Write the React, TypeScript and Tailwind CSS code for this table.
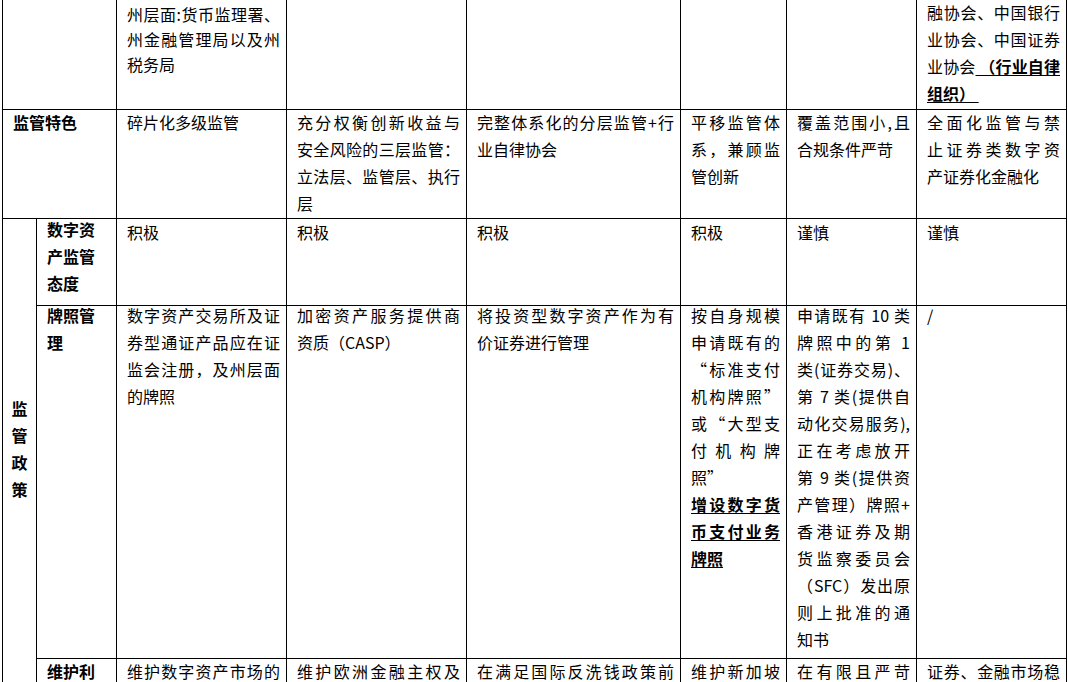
import React from 'react';

type Para = { lines: React.ReactNode[]; bold?: boolean; underline?: boolean };

const p = (...lines: React.ReactNode[]): Para => ({ lines });
const strong = (...lines: React.ReactNode[]): Para => ({ lines, bold: true, underline: true });

function Lines({ paras, className = '' }: { paras: Para[]; className?: string }) {
  return (
    <div className={className}>
      {paras.map((para, i) => (
        <div key={i} className={para.bold ? 'font-bold' : ''}>
          {para.lines.map((line, j) => (
            <div
              key={j}
              className={
                j < para.lines.length - 1 ? 'text-justify [text-align-last:justify]' : ''
              }
            >
              {para.underline ? <span className="underline underline-offset-2">{line}</span> : line}
            </div>
          ))}
        </div>
      ))}
    </div>
  );
}

// bold row labels, left aligned, no spreading
function Label({ lines, className = '' }: { lines: string[]; className?: string }) {
  return (
    <div className={`font-bold ${className}`}>
      {lines.map((l, i) => (
        <div key={i}>{l}</div>
      ))}
    </div>
  );
}

function Cell({
  className = '',
  children,
}: {
  className?: string;
  children?: React.ReactNode;
}) {
  return (
    <div className={`border-r border-b border-black pl-[10px] pr-[6px] ${className}`}>
      {children}
    </div>
  );
}

export default function App() {
  return (
    <div className="w-[1068px] h-[682px] overflow-hidden bg-white pl-[2px] text-black text-[16px] leading-[27px] font-['Noto_Sans_CJK_SC',sans-serif]">
      <div className="grid grid-cols-[34px_80px_170px_180px_214px_106px_130px_150px] grid-rows-[110px_109px_87px_353px_120px] border-l border-black">
        {/* row 0, partly above the fold */}
        <Cell className="col-span-2" />
        <Cell>
          <Lines
            className="pt-[2px] leading-[25px]"
            paras={[p('州层面:货币监理署、', '州金融管理局以及州', '税务局')]}
          />
        </Cell>
        <Cell />
        <Cell />
        <Cell />
        <Cell />
        <Cell className="pt-[1px]">
          <Lines
            className="-mt-[2px]"
            paras={[
              p(
                '融协会、中国银行',
                '业协会、中国证券',
                <>
                  业协会
                  <span className="font-bold underline underline-offset-2"> （行业自律</span>
                </>,
                <span className="font-bold underline underline-offset-2">组织）{'\u00a0'}</span>
              ),
            ]}
          />
        </Cell>

        {/* 监管特色 */}
        <Cell className="col-span-2">
          <Label className="-mt-[1px]" lines={['监管特色']} />
        </Cell>
        <Cell>
          <Lines className="-mt-[1px]" paras={[p('碎片化多级监管')]} />
        </Cell>
        <Cell>
          <Lines
            className="-mt-[1px]"
            paras={[p('充分权衡创新收益与', '安全风险的三层监管：', '立法层、监管层、执行', '层')]}
          />
        </Cell>
        <Cell>
          <Lines className="-mt-[1px]" paras={[p('完整体系化的分层监管+行', '业自律协会')]} />
        </Cell>
        <Cell>
          <Lines className="-mt-[1px]" paras={[p('平移监管体', '系，兼顾监', '管创新')]} />
        </Cell>
        <Cell>
          <Lines className="-mt-[1px]" paras={[p('覆盖范围小,且', '合规条件严苛')]} />
        </Cell>
        <Cell>
          <Lines
            className="-mt-[1px]"
            paras={[p('全面化监管与禁', '止证券类数字资', '产证券化金融化')]}
          />
        </Cell>

        {/* 监管政策 group */}
        <Cell className="row-span-3 !pl-0 !pr-0 text-center font-bold">
          <div className="pt-[176px]">
            <div>监</div>
            <div>管</div>
            <div>政</div>
            <div>策</div>
          </div>
        </Cell>

        <Cell>
          <Label className="-mt-[3px]" lines={['数字资', '产监管', '态度']} />
        </Cell>
        <Cell>积极</Cell>
        <Cell>积极</Cell>
        <Cell>积极</Cell>
        <Cell>积极</Cell>
        <Cell>谨慎</Cell>
        <Cell>谨慎</Cell>

        <Cell>
          <Label className="-mt-[4px]" lines={['牌照管', '理']} />
        </Cell>
        <Cell>
          <Lines
            className="-mt-[4px]"
            paras={[p('数字资产交易所及证', '券型通证产品应在证', '监会注册，及州层面', '的牌照')]}
          />
        </Cell>
        <Cell>
          <Lines className="-mt-[4px]" paras={[p('加密资产服务提供商', '资质（CASP）')]} />
        </Cell>
        <Cell>
          <Lines className="-mt-[4px]" paras={[p('将投资型数字资产作为有', '价证券进行管理')]} />
        </Cell>
        <Cell>
          <Lines
            className="-mt-[4px]"
            paras={[
              p('按自身规模', '申请既有的', '“标准支付', '机构牌照”', '或“大型支', '付机构牌', '照”'),
              strong('增设数字货', '币支付业务', '牌照'),
            ]}
          />
        </Cell>
        <Cell>
          <Lines
            className="-mt-[4px]"
            paras={[
              p(
                '申请既有 10 类',
                '牌照中的第 1',
                '类(证券交易)、',
                '第 7 类(提供自',
                '动化交易服务),',
                '正在考虑放开',
                '第 9 类(提供资',
                '产管理）牌照+',
                '香港证券及期',
                '货监察委员会',
                '（SFC）发出原',
                '则上批准的通',
                '知书'
              ),
            ]}
          />
        </Cell>
        <Cell>
          <div className="-mt-[4px]">/</div>
        </Cell>

        {/* 维护利益 row, cut by the fold */}
        <Cell>
          <Label className="-mt-[1px]" lines={['维护利', '益']} />
        </Cell>
        <Cell>
          <Lines className="-mt-[1px]" paras={[p('维护数字资产市场的', '')]} />
        </Cell>
        <Cell>
          <Lines className="-mt-[1px]" paras={[p('维护欧洲金融主权及', '')]} />
        </Cell>
        <Cell>
          <Lines className="-mt-[1px]" paras={[p('在满足国际反洗钱政策前', '')]} />
        </Cell>
        <Cell>
          <Lines className="-mt-[1px]" paras={[p('维护新加坡', '')]} />
        </Cell>
        <Cell>
          <Lines className="-mt-[1px]" paras={[p('在有限且严苛', '')]} />
        </Cell>
        <Cell>
          <Lines className="-mt-[1px]" paras={[p('证券、金融市场稳', '')]} />
        </Cell>
      </div>
    </div>
  );
}
